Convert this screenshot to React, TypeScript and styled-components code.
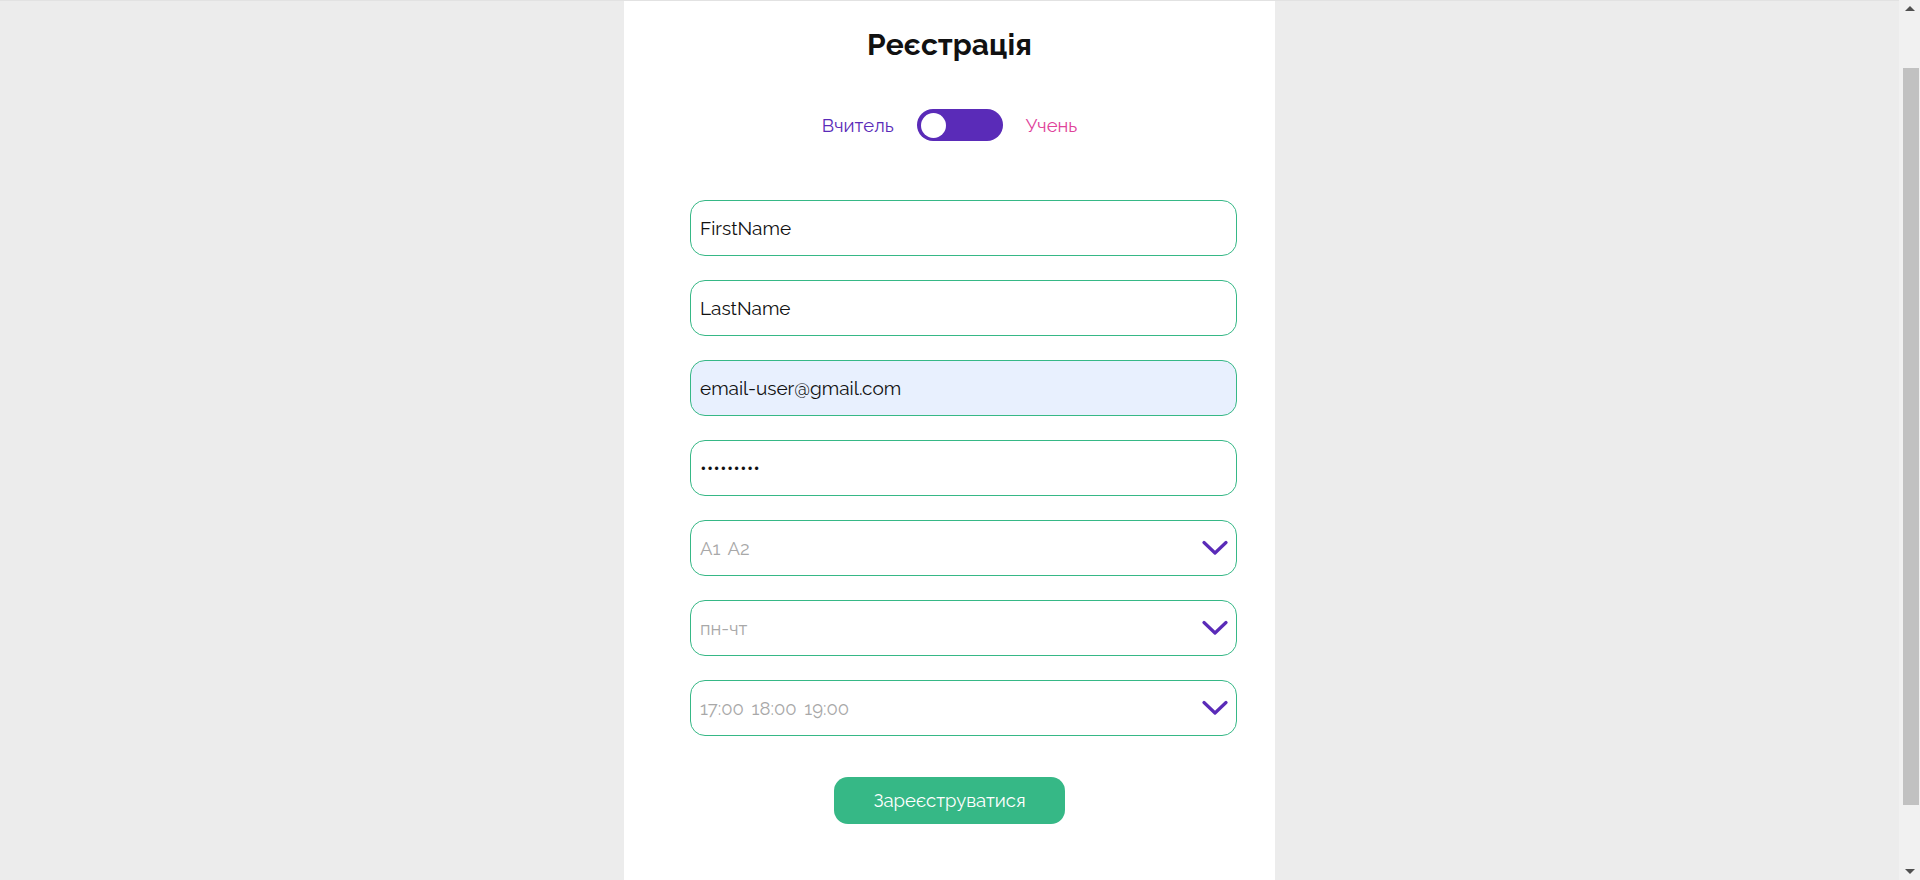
import React from 'react';
import styled, { createGlobalStyle } from 'styled-components';

const GlobalStyle = createGlobalStyle`
    html, body {
        margin: 0;
        padding: 0;
    }
    body {
        background-color: #ececec;
        font-family: 'Raleway', 'Lato', sans-serif;
        color: #111111;
        overflow: hidden;
    }
`;

const Viewport = styled.div`
    display: flex;
    height: 100vh;
`;

const Stage = styled.div`
    flex: 1;
    display: flex;
    justify-content: center;
    border-top: 1px solid #e2e2e2;
`;

const ScrollRail = styled.div`
    width: 21px;
    background-color: #f1f1f1;
    display: flex;
    flex-direction: column;
    align-items: center;
`;

const RailArrow = styled.div<{ $down?: boolean }>`
    height: 17px;
    width: 21px;
    display: flex;
    align-items: center;
    justify-content: center;
    margin-top: ${(p) => (p.$down ? 'auto' : '0')};

    &::before {
        content: '';
        border-left: 5px solid transparent;
        border-right: 5px solid transparent;
        border-bottom: ${(p) => (p.$down ? '0' : '5px solid #505050')};
        border-top: ${(p) => (p.$down ? '5px solid #505050' : '0')};
    }
`;

const RailThumb = styled.div`
    margin-top: 51px;
    margin-left: 2px;
    width: 16px;
    height: 737px;
    background-color: #c1c1c1;
`;

const Card = styled.main`
    width: 651px;
    background-color: #ffffff;
    display: flex;
    flex-direction: column;
    align-items: center;
    padding-top: 26px;
    box-sizing: border-box;
`;

const Title = styled.h1`
    margin: 0;
    font-size: 30px;
    line-height: 36px;
    font-weight: 700;
    color: #111111;
`;

const ToggleRow = styled.div`
    margin-top: 46px;
    display: flex;
    align-items: center;
    gap: 23px;
`;

const RoleLabel = styled.span<{ $color: string }>`
    font-size: 18.5px;
    color: ${(p) => p.$color};
`;

const Switch = styled.button`
    width: 86px;
    height: 32px;
    border: none;
    border-radius: 16px;
    background-color: #5a2bb8;
    padding: 0 4px;
    display: flex;
    align-items: center;
    cursor: pointer;
`;

const Knob = styled.span`
    width: 25px;
    height: 25px;
    border-radius: 50%;
    background-color: #ffffff;
`;

const Form = styled.form`
    margin-top: 59px;
    width: 547px;
    padding-left: 28px;
    display: flex;
    flex-direction: column;
    gap: 24px;
`;

const Field = styled.input<{ $filled?: boolean }>`
    height: 56px;
    box-sizing: border-box;
    border: 1px solid #36b886;
    border-radius: 15px;
    padding: 0 9px;
    font-family: inherit;
    font-size: 19px;
    color: #111111;
    background-color: ${(p) => (p.$filled ? '#e8f0fe' : '#ffffff')};
    outline: none;
`;

const SelectBox = styled.div`
    height: 56px;
    box-sizing: border-box;
    border: 1px solid #36b886;
    border-radius: 15px;
    padding: 0 8px 0 9px;
    display: flex;
    align-items: center;
    justify-content: space-between;
    cursor: pointer;
`;

const Placeholder = styled.span`
    font-size: 18.5px;
    color: #a8a8a8;
    word-spacing: 3px;
`;

const SubmitButton = styled.button`
    margin-top: 41px;
    width: 231px;
    height: 47px;
    border: none;
    border-radius: 14px;
    background-color: #36b886;
    color: #ffffff;
    font-family: inherit;
    font-size: 18.5px;
    cursor: pointer;
`;

function Chevron() {
    return (
        <svg width="26" height="16" viewBox="0 0 26 16" fill="none">
            <path d="M2 2.5 L13 13 L24 2.5" stroke="#5a2bb8" strokeWidth="3.2" strokeLinecap="round" strokeLinejoin="round" />
        </svg>
    );
}

function Select(props: { placeholder: string }) {
    return (
        <SelectBox>
            <Placeholder>{props.placeholder}</Placeholder>
            <Chevron />
        </SelectBox>
    );
}

export default function App() {
    return (
        <Viewport>
            <GlobalStyle />
            <Stage>
                <Card>
                    <Title>Реєстрація</Title>
                    <ToggleRow>
                        <RoleLabel $color="#5a2bb8">Вчитель</RoleLabel>
                        <Switch type="button">
                            <Knob />
                        </Switch>
                        <RoleLabel $color="#e0429a">Учень</RoleLabel>
                    </ToggleRow>
                    <Form onSubmit={(e) => e.preventDefault()}>
                        <Field type="text" defaultValue="FirstName" />
                        <Field type="text" defaultValue="LastName" />
                        <Field type="email" defaultValue="email-user@gmail.com" $filled />
                        <Field type="password" defaultValue="123456789" />
                        <Select placeholder="A1 A2" />
                        <Select placeholder="пн-чт" />
                        <Select placeholder="17:00 18:00 19:00" />
                    </Form>
                    <SubmitButton type="button">Зареєструватися</SubmitButton>
                </Card>
            </Stage>
            <ScrollRail>
                <RailArrow />
                <RailThumb />
                <RailArrow $down />
            </ScrollRail>
        </Viewport>
    );
}
